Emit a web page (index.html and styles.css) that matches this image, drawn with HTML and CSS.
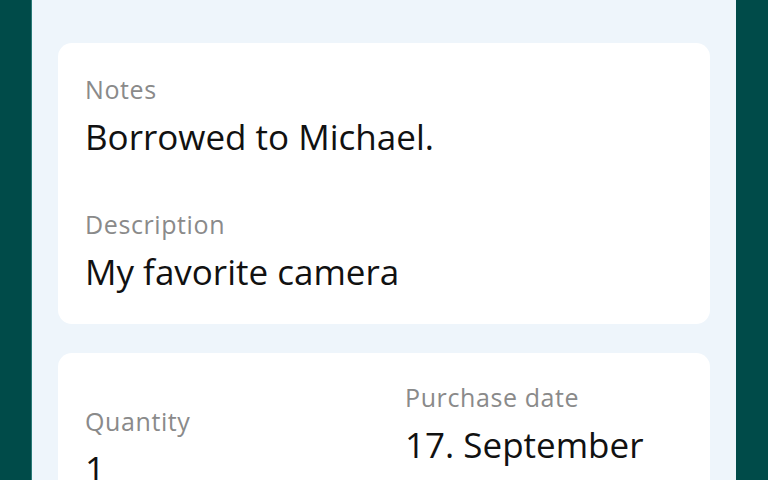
FILE: index.html
```html
<!DOCTYPE html>
<html>
<head>
<meta charset="utf-8">
<link rel="stylesheet" href="styles.css">
</head>
<body>
<div class="frame">
  <div class="side"></div>
  <main class="panel">
    <section class="card card-notes">
      <div class="field">
        <div class="label">Notes</div>
        <div class="value">Borrowed to Michael.</div>
      </div>
      <div class="field">
        <div class="label">Description</div>
        <div class="value">My favorite camera</div>
      </div>
    </section>
    <section class="card card-grid">
      <div class="field field-qty">
        <div class="label">Quantity</div>
        <div class="value">1</div>
      </div>
      <div class="field">
        <div class="label">Purchase date</div>
        <div class="value">17. September</div>
      </div>
    </section>
  </main>
  <div class="side side-right"></div>
</div>
</body>
</html>
```
FILE: styles.css
```css
html, body {
  margin: 0;
  padding: 0;
  height: 100%;
  overflow: hidden;
}
body {
  font-family: "Open Sans", "Noto Sans", sans-serif;
}
.frame {
  display: flex;
  height: 480px;
  width: 768px;
}
.side {
  width: 31px;
  background: #004b49;
  border-right: 1px solid #2a7a78;
}
.side-right {
  width: 32px;
  border-right: none;
}
.panel {
  flex: 1;
  background: #eef5fb;
  padding: 43px 26px 0 26px;
  display: flex;
  flex-direction: column;
  gap: 29px;
}
.card {
  background: #ffffff;
  border-radius: 14px;
  padding: 31px 27px 30px 27px;
}
.card-notes {
  display: flex;
  flex-direction: column;
  gap: 50px;
}
.card-grid {
  display: grid;
  grid-template-columns: 320px 1fr;
  padding-top: 29px;
}
.field-qty {
  padding-top: 24px;
}
.label {
  font-size: 25px;
  letter-spacing: 0.6px;
  color: #8a8a8a;
  line-height: 30px;
}
.value {
  font-size: 35px;
  color: #111111;
  line-height: 44px;
  margin-top: 11px;
}
```
